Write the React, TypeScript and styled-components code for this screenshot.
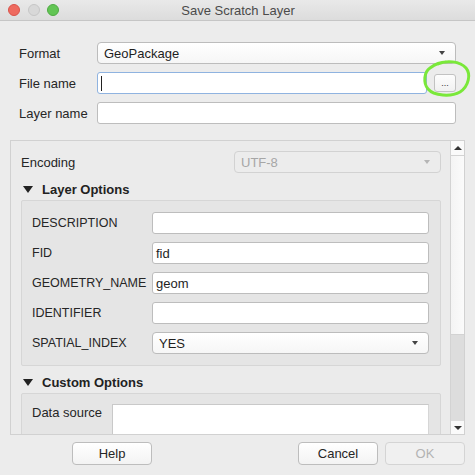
import React from "react";
import styled, { createGlobalStyle } from "styled-components";

const Global = createGlobalStyle`
  html, body { margin: 0; padding: 0; background: #ececec; }
  body { font-family: "Liberation Sans", Arial, sans-serif; font-size: 13px; color: #262626; }
`;

const Window = styled.div`
  position: relative;
  width: 475px;
  height: 475px;
  background: #ececec;
  display: flex;
  flex-direction: column;
  overflow: hidden;
`;

const TitleBar = styled.div`
  height: 21px;
  box-sizing: border-box;
  background: linear-gradient(#e9e9e9, #dcdcdc);
  border-bottom: 1px solid #c6c6c6;
  display: flex;
  align-items: center;
  position: relative;
`;

const Lights = styled.div`
  display: flex;
  gap: 7.5px;
  padding-left: 8px;
`;

const Light = styled.span<{ $c: string; $b: string }>`
  width: 12px;
  height: 12px;
  border-radius: 50%;
  background: ${(p) => p.$c};
  box-sizing: border-box;
  border: 0.5px solid ${(p) => p.$b};
`;

const Title = styled.div`
  flex: 1;
  text-align: center;
  margin-right: 58px;
  font-size: 13px;
  color: #4a4a4a;
`;

const TopForm = styled.div`
  display: grid;
  grid-template-columns: 78px 1fr;
  row-gap: 8px;
  grid-auto-rows: 22px;
  align-items: center;
  padding: 21px 19px 0 19px;
`;

const Label = styled.div`
  font-size: 13px;
  color: #262626;
  white-space: nowrap;
`;

const OptionLabel = styled(Label)`
  font-size: 12.5px;
`;

const Combo = styled.div<{ $disabled?: boolean }>`
  height: 22px;
  box-sizing: border-box;
  border: 1px solid ${(p) => (p.$disabled ? "#d2d2d2" : "#bcbcbc")};
  border-radius: 4px;
  background: ${(p) => (p.$disabled ? "#ececec" : "linear-gradient(#ffffff, #f6f6f6)")};
  display: flex;
  align-items: center;
  justify-content: space-between;
  padding: 0 10px 0 6px;
  color: ${(p) => (p.$disabled ? "#a6a6a6" : "#1e1e1e")};
  font-size: 13px;
`;

const Arrow = styled.span<{ $disabled?: boolean }>`
  width: 0;
  height: 0;
  border-left: 3.5px solid transparent;
  border-right: 3.5px solid transparent;
  border-top: 4px solid ${(p) => (p.$disabled ? "#b5b5b5" : "#444")};
`;

const Field = styled.div<{ $focus?: boolean }>`
  height: 22px;
  box-sizing: border-box;
  background: #fff;
  border: 1px solid ${(p) => (p.$focus ? "#8fb3e0" : "#bdbdbd")};
  border-radius: 3px;
  display: flex;
  align-items: center;
  padding: 1px 0 0 3px;
  font-size: 13px;
  color: #1e1e1e;
`;

const Caret = styled.span`
  width: 1px;
  height: 15px;
  background: #222;
`;

const FileRow = styled.div`
  display: flex;
  align-items: center;
  gap: 7px;
`;

const Grow = styled.div`
  flex: 1;
`;

const BrowseButton = styled.div`
  width: 22px;
  height: 18px;
  box-sizing: border-box;
  border: 1px solid #c2c2c2;
  border-radius: 3px;
  background: linear-gradient(#fdfdfd, #f1f1f1);
  font-size: 9px;
  color: #333;
  display: flex;
  align-items: flex-end;
  justify-content: center;
  padding-bottom: 3px;
  line-height: 1;
`;

const ScrollArea = styled.div`
  margin: 16px 10px 0 10px;
  height: 295px;
  box-sizing: border-box;
  border: 1px solid #d1d1d1;
  display: flex;
  background: #ebebeb;
`;

const ScrollContent = styled.div`
  flex: 1;
  overflow: hidden;
  padding: 10px 9px 0 10px;
`;

const EncodingRow = styled.div`
  display: flex;
  align-items: center;
  justify-content: space-between;
  height: 22px;
`;

const EncodingCombo = styled(Combo)`
  width: 207px;
`;

const SectionHeader = styled.div`
  height: 27px;
  box-sizing: border-box;
  display: flex;
  align-items: center;
  gap: 9px;
  padding: 6px 0 0 2px;
  font-weight: bold;
  font-size: 13px;
  color: #222;
`;

const Tri = styled.span`
  width: 0;
  height: 0;
  border-left: 5px solid transparent;
  border-right: 5px solid transparent;
  border-top: 7px solid #222;
`;

const GroupBox = styled.div<{ $pt?: number }>`
  background: #e5e5e5;
  border: 1px solid #d6d6d6;
  border-radius: 2px;
  padding: ${(p) => p.$pt ?? 11}px 11px 11px 10px;
`;

const OptionGrid = styled.div<{ $label: number }>`
  display: grid;
  grid-template-columns: ${(p) => p.$label}px 1fr;
  grid-auto-rows: 22px;
  row-gap: 8px;
  align-items: center;
`;

const TextArea = styled.div`
  height: 60px;
  background: #fff;
  border: 1px solid #c9c9c9;
  border-right-color: #d6d6d6;
`;

const SourceRow = styled.div`
  display: grid;
  grid-template-columns: 80px 1fr;
`;

const TopLabel = styled(Label)`
  padding-top: 1px;
`;

const Scrollbar = styled.div`
  width: 13px;
  border-left: 1px solid #d3d3d3;
  display: flex;
  flex-direction: column;
  background: #dddddd;
`;

const ScrollBtn = styled.div<{ $h: number }>`
  height: ${(p) => p.$h}px;
  background: #fafafa;
  display: flex;
  align-items: center;
  justify-content: center;
  box-sizing: border-box;
`;

const UpTri = styled.span`
  width: 0;
  height: 0;
  border-left: 4px solid transparent;
  border-right: 4px solid transparent;
  border-bottom: 4px solid #333;
`;

const DownTri = styled.span`
  width: 0;
  height: 0;
  border-left: 4px solid transparent;
  border-right: 4px solid transparent;
  border-top: 4px solid #333;
`;

const Handle = styled.div`
  height: 180px;
  background: linear-gradient(90deg, #f4f4f4, #fbfbfb);
  border-top: 1px solid #d3d3d3;
  border-bottom: 1px solid #d3d3d3;
  box-sizing: border-box;
`;

const Track = styled.div`
  flex: 1;
  background: #dddddd;
`;

const ButtonRow = styled.div`
  display: flex;
  align-items: center;
  gap: 7px;
  padding: 7px 10px 0 72px;
`;

const Button = styled.div<{ $disabled?: boolean }>`
  width: 80px;
  height: 23px;
  box-sizing: border-box;
  border: 1px solid ${(p) => (p.$disabled ? "#d4d4d4" : "#bdbdbd")};
  border-radius: 4px;
  background: ${(p) => (p.$disabled ? "#f0f0f0" : "linear-gradient(#ffffff, #f3f3f3)")};
  display: flex;
  align-items: center;
  justify-content: center;
  font-size: 13px;
  color: ${(p) => (p.$disabled ? "#b3b3b3" : "#262626")};
`;

const Spacer = styled.div`
  flex: 1;
`;

const Annotation = styled.svg`
  position: absolute;
  left: 418px;
  top: 56px;
  pointer-events: none;
`;

export default function App() {
  return (
    <>
      <Global />
      <Window>
        <TitleBar>
          <Lights>
            <Light $c="#ee6a5f" $b="#d9534a" />
            <Light $c="#d8d8d8" $b="#c6c6c6" />
            <Light $c="#62c554" $b="#4fab43" />
          </Lights>
          <Title>Save Scratch Layer</Title>
        </TitleBar>

        <TopForm>
          <Label>Format</Label>
          <Combo>
            <span>GeoPackage</span>
            <Arrow />
          </Combo>
          <Label>File name</Label>
          <FileRow>
            <Grow>
              <Field $focus>
                <Caret />
              </Field>
            </Grow>
            <BrowseButton>...</BrowseButton>
          </FileRow>
          <Label>Layer name</Label>
          <Field />
        </TopForm>

        <ScrollArea>
          <ScrollContent>
            <EncodingRow>
              <Label>Encoding</Label>
              <EncodingCombo $disabled>
                <span>UTF-8</span>
                <Arrow $disabled />
              </EncodingCombo>
            </EncodingRow>

            <SectionHeader>
              <Tri />
              <span>Layer Options</span>
            </SectionHeader>
            <GroupBox>
              <OptionGrid $label={120}>
                <OptionLabel>DESCRIPTION</OptionLabel>
                <Field />
                <OptionLabel>FID</OptionLabel>
                <Field>fid</Field>
                <OptionLabel>GEOMETRY_NAME</OptionLabel>
                <Field>geom</Field>
                <OptionLabel>IDENTIFIER</OptionLabel>
                <Field />
                <OptionLabel>SPATIAL_INDEX</OptionLabel>
                <Combo>
                  <span>YES</span>
                  <Arrow />
                </Combo>
              </OptionGrid>
            </GroupBox>

            <SectionHeader>
              <Tri />
              <span>Custom Options</span>
            </SectionHeader>
            <GroupBox $pt={10}>
              <SourceRow>
                <TopLabel>Data source</TopLabel>
                <TextArea />
              </SourceRow>
            </GroupBox>
          </ScrollContent>
          <Scrollbar>
            <ScrollBtn $h={14}>
              <UpTri />
            </ScrollBtn>
            <Handle />
            <Track />
            <ScrollBtn $h={13}>
              <DownTri />
            </ScrollBtn>
          </Scrollbar>
        </ScrollArea>

        <ButtonRow>
          <Button>Help</Button>
          <Spacer />
          <Button>Cancel</Button>
          <Button $disabled>OK</Button>
        </ButtonRow>

        <Annotation width="54" height="46" viewBox="0 0 54 46">
          <path
            d="M20 8 C 28 4, 42 5, 48 12 C 53 18, 51 30, 42 36 C 33 41, 16 40, 10 33 C 5 27, 6 16, 12 12 C 16 9, 22 6, 28 6"
            fill="none"
            stroke="#7ae83a"
            strokeWidth="3"
            strokeLinecap="round"
          />
        </Annotation>
      </Window>
    </>
  );
}
